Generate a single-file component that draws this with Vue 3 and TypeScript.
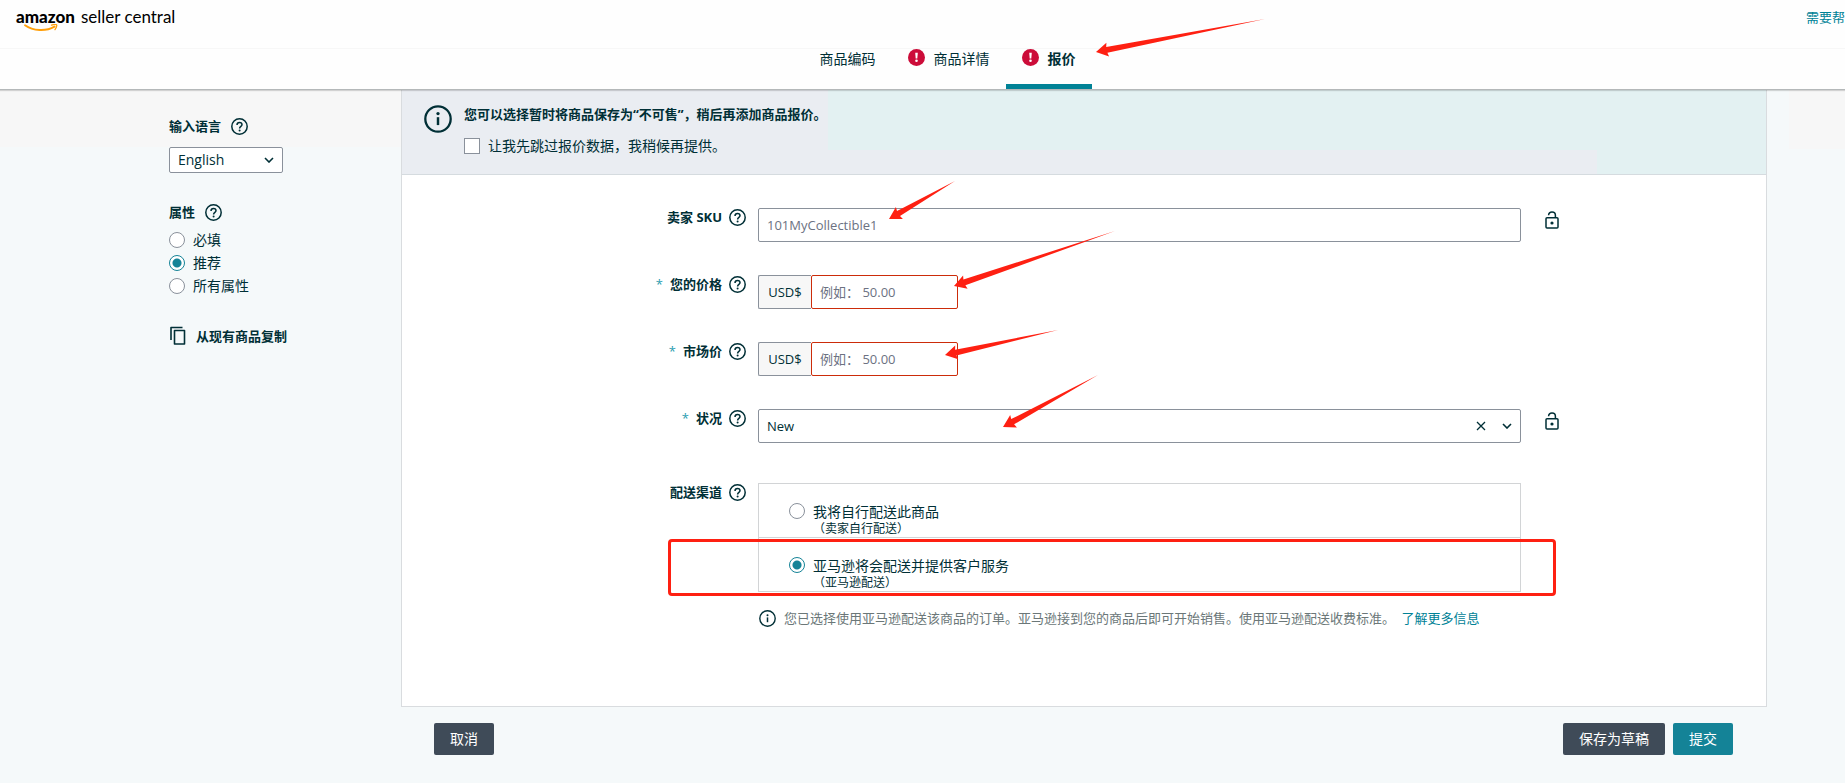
<script setup lang="ts">
import { ref } from 'vue'

type Point = [number, number]

interface Tab {
  label: string
  alert: boolean
  active: boolean
}

const tabs: Tab[] = [
  { label: '商品编码', alert: false, active: false },
  { label: '商品详情', alert: true, active: false },
  { label: '报价', alert: true, active: true },
]

const attributeOptions = ['必填', '推荐', '所有属性']
const attribute = ref('推荐')
const language = ref('English')
const skipOffer = ref(false)
const sku = ref('')
const condition = ref('New')

const prices = ref([
  { id: 'price', label: '您的价格', value: '' },
  { id: 'list-price', label: '市场价', value: '' },
])

const channels = [
  { id: 'mfn', label: '我将自行配送此商品', note: '（卖家自行配送）' },
  { id: 'afn', label: '亚马逊将会配送并提供客户服务', note: '（亚马逊配送）' },
]
const channel = ref('afn')

const arrows: { tip: Point; tail: Point }[] = [
  { tip: [1096, 52], tail: [1265, 19] },
  { tip: [889, 219], tail: [955, 181] },
  { tip: [954, 286], tail: [1115, 231] },
  { tip: [945, 355], tail: [1058, 330] },
  { tip: [1003, 427], tail: [1098, 375] },
]

// Tapered arrow: wide at the head, narrowing to a point at the tail.
function arrowPoints(tip: Point, tail: Point): string {
  const dx = tail[0] - tip[0]
  const dy = tail[1] - tip[1]
  const len = Math.hypot(dx, dy)
  const ux = dx / len
  const uy = dy / len
  const at = (along: number, side: number) =>
    `${(tip[0] + ux * along - uy * side).toFixed(1)},${(tip[1] + uy * along + ux * side).toFixed(1)}`
  return [at(0, 0), at(12, 7), at(11, 3), at(len, 0), at(11, -3), at(12, -7)].join(' ')
}
</script>

<template>
  <div class="page">
    <header class="top">
      <div class="brand-bar">
        <a class="brand" href="#">
          <strong>amazon</strong><span>seller central</span>
          <svg class="smile" viewBox="0 0 34 8" aria-hidden="true">
            <path d="M1 1.2C9 7 22 7.6 30.5 2.6" fill="none" stroke="#ff9f0a" stroke-width="1.9" stroke-linecap="round" />
            <path d="M27.5 1.2C29.5.4 31.8.2 32.6.8C33 1.7 32 4.2 31 5.6" fill="none" stroke="#ff9f0a" stroke-width="1.3" stroke-linecap="round" />
          </svg>
        </a>
        <a class="help-link" href="#">需要帮</a>
      </div>
      <nav class="tabs">
        <a v-for="t in tabs" :key="t.label" href="#" class="tab" :class="{ active: t.active }">
          <svg v-if="t.alert" class="icon" viewBox="0 0 17 17" aria-hidden="true">
            <circle cx="8.5" cy="8.5" r="8.5" fill="#cc0c39" />
            <path d="M7.2 3.8h2.6l-.5 5.6H7.7z" fill="#fff" />
            <circle cx="8.5" cy="11.8" r="1.3" fill="#fff" />
          </svg>
          <span>{{ t.label }}</span>
        </a>
      </nav>
    </header>

    <div class="body">
      <aside class="side">
        <div class="side-title">
          <label for="language">输入语言</label>
          <svg class="icon" viewBox="0 0 17 17" aria-hidden="true"><use href="#help" /></svg>
        </div>
        <div class="select language">
          <select id="language" v-model="language">
            <option>English</option>
          </select>
          <svg class="chevron" viewBox="0 0 10 6" aria-hidden="true"><path d="M1 1l4 4 4-4" /></svg>
        </div>

        <fieldset class="attributes">
          <legend class="side-title">
            <span>属性</span>
            <svg class="icon" viewBox="0 0 17 17" aria-hidden="true"><use href="#help" /></svg>
          </legend>
          <label v-for="o in attributeOptions" :key="o" class="choice">
            <input v-model="attribute" type="radio" name="attribute" :value="o" />
            <span>{{ o }}</span>
          </label>
        </fieldset>

        <button type="button" class="copy">
          <svg viewBox="0 0 18 20" aria-hidden="true">
            <path d="M2 14V1.5h11.5M5.5 4.5h10v13.5h-10z" fill="none" stroke="#002f36" stroke-width="1.6" stroke-linejoin="round" />
          </svg>
          <span>从现有商品复制</span>
        </button>
      </aside>

      <main class="main">
        <section class="card">
          <div class="notice">
            <svg class="notice-icon" viewBox="0 0 17 17" aria-hidden="true"><use href="#info" /></svg>
            <div class="notice-text">
              <strong>您可以选择暂时将商品保存为“不可售”，稍后再添加商品报价。</strong>
              <label class="choice">
                <input v-model="skipOffer" type="checkbox" />
                <span>让我先跳过报价数据，我稍候再提供。</span>
              </label>
            </div>
          </div>

          <form class="form" @submit.prevent>
            <div class="row">
              <div class="label">
                <label for="sku">卖家 SKU</label>
                <svg class="icon" viewBox="0 0 17 17" aria-hidden="true"><use href="#help" /></svg>
              </div>
              <input id="sku" v-model="sku" class="text" type="text" placeholder="101MyCollectible1" />
              <button type="button" class="lock" aria-label="锁定">
                <svg viewBox="0 0 14 18" aria-hidden="true"><use href="#lock" /></svg>
              </button>
            </div>

            <div v-for="p in prices" :key="p.id" class="row">
              <div class="label">
                <span class="star">*</span>
                <label :for="p.id">{{ p.label }}</label>
                <svg class="icon" viewBox="0 0 17 17" aria-hidden="true"><use href="#help" /></svg>
              </div>
              <div class="money">
                <span class="currency">USD$</span>
                <input :id="p.id" v-model="p.value" class="text invalid" type="text" placeholder="例如： 50.00" />
              </div>
            </div>

            <div class="row">
              <div class="label">
                <span class="star">*</span>
                <label for="condition">状况</label>
                <svg class="icon" viewBox="0 0 17 17" aria-hidden="true"><use href="#help" /></svg>
              </div>
              <div class="select condition">
                <select id="condition" v-model="condition">
                  <option>New</option>
                </select>
                <button type="button" class="clear" aria-label="清除" @click="condition = ''">
                  <svg viewBox="0 0 10 10" aria-hidden="true">
                    <path d="M1 1l8 8M9 1l-8 8" stroke="#002f36" stroke-width="1.3" />
                  </svg>
                </button>
                <svg class="chevron" viewBox="0 0 10 6" aria-hidden="true"><path d="M1 1l4 4 4-4" /></svg>
              </div>
              <button type="button" class="lock" aria-label="锁定">
                <svg viewBox="0 0 14 18" aria-hidden="true"><use href="#lock" /></svg>
              </button>
            </div>

            <div class="row channel-row">
              <div class="label">
                <span id="channel-label">配送渠道</span>
                <svg class="icon" viewBox="0 0 17 17" aria-hidden="true"><use href="#help" /></svg>
              </div>
              <div>
                <div class="channels" role="radiogroup" aria-labelledby="channel-label">
                  <div v-for="c in channels" :key="c.id" class="channel">
                    <label class="choice">
                      <input v-model="channel" type="radio" name="channel" :value="c.id" />
                      <span>{{ c.label }}<small>{{ c.note }}</small></span>
                    </label>
                    <div v-if="c.id === 'afn'" class="mark"></div>
                  </div>
                </div>
                <p class="hint">
                  <svg class="icon" viewBox="0 0 17 17" aria-hidden="true"><use href="#info" /></svg>
                  <span>
                    您已选择使用亚马逊配送该商品的订单。亚马逊接到您的商品后即可开始销售。使用亚马逊配送收费标准。
                    <a href="#">了解更多信息</a>
                  </span>
                </p>
              </div>
            </div>
          </form>
        </section>

        <footer class="actions">
          <button type="button" class="btn">取消</button>
          <div class="group">
            <button type="button" class="btn">保存为草稿</button>
            <button type="button" class="btn primary">提交</button>
          </div>
        </footer>
      </main>
    </div>

    <svg class="arrows" aria-hidden="true">
      <defs>
        <symbol id="help" viewBox="0 0 17 17">
          <circle cx="8.5" cy="8.5" r="7.7" fill="none" stroke="#002f36" stroke-width="1.5" />
          <path d="M6 6.9C6 5.4 7 4.6 8.5 4.6S11 5.4 11 6.8C11 8.3 8.6 8.6 8.6 10.4" fill="none" stroke="#002f36" stroke-width="1.5" />
          <circle cx="8.6" cy="12.5" r="1" fill="#002f36" />
        </symbol>
        <symbol id="info" viewBox="0 0 17 17">
          <circle cx="8.5" cy="8.5" r="7.7" fill="none" stroke="#002f36" stroke-width="1.4" />
          <path d="M8.5 7.4v4.8" stroke="#002f36" stroke-width="1.5" />
          <circle cx="8.5" cy="5.2" r="1" fill="#002f36" />
        </symbol>
        <symbol id="lock" viewBox="0 0 14 18">
          <rect x="1" y="6.8" width="12" height="10.2" rx="1" fill="none" stroke="#002f36" stroke-width="1.5" />
          <path d="M3.6 4.2C3.6 2.2 5 1 7 1s3.4 1.2 3.4 3.2v2.6" fill="none" stroke="#002f36" stroke-width="1.5" />
          <circle cx="7" cy="12" r="1.6" fill="#002f36" />
        </symbol>
      </defs>
      <polygon v-for="(a, i) in arrows" :key="i" :points="arrowPoints(a.tip, a.tail)" fill="#fe2012" />
    </svg>
  </div>
</template>

<style>
body {
  margin: 0;
  background: #f5f9fa;
}
</style>

<style scoped>
.page {
  position: relative;
  min-height: 100vh;
  background: #f5f9fa;
  color: #002f36;
  font: 14px/20px 'Open Sans', 'Noto Sans CJK SC', sans-serif;
}
.page * {
  box-sizing: border-box;
}
a {
  color: #008296;
  text-decoration: none;
}
button,
input,
select {
  font: inherit;
  color: inherit;
  margin: 0;
}
button {
  padding: 0;
  border: 0;
  background: none;
  cursor: pointer;
}
.icon {
  width: 17px;
  height: 17px;
  flex: none;
}

/* header */
.top {
  position: relative;
  background: #fefefe;
  border-bottom: 1px solid #b4b8b9;
  box-shadow: 0 1px 1px rgba(0, 0, 0, 0.15);
}
.brand-bar {
  display: flex;
  justify-content: space-between;
  align-items: flex-start;
  height: 49px;
  padding: 7px 0 0 16px;
  border-bottom: 1px solid #f7f7f7;
}
.brand {
  position: relative;
  display: flex;
  gap: 6px;
  color: #000;
  font-family: Lato, sans-serif;
  font-size: 17px;
  white-space: nowrap;
}
.brand strong {
  font-weight: 900;
}
.smile {
  position: absolute;
  left: 8px;
  top: 17px;
  width: 34px;
  height: 8px;
}
.help-link {
  font-size: 13px;
}
.tabs {
  display: flex;
  justify-content: center;
  height: 40px;
  padding-left: 50px;
}
.tab {
  display: flex;
  align-items: flex-start;
  gap: 9px;
  padding: 0 16px;
  color: inherit;
}
.tab.active {
  font-weight: 700;
  border-bottom: 5px solid #008296;
}

/* sidebar */
.body {
  display: flex;
  padding-right: 78px;
  background:
    linear-gradient(#f7f7f7, #f7f7f7) left top / 401px 57px no-repeat,
    linear-gradient(#f7f7f7, #f7f7f7) right top / 56px 59px no-repeat;
}
.side {
  width: 401px;
  flex: none;
  padding: 26px 0 0 169px;
}
.side-title {
  display: flex;
  align-items: center;
  gap: 10px;
  padding: 0;
  font-size: 13px;
  font-weight: 700;
}
.select {
  display: flex;
  align-items: center;
  border: 1px solid #8a919b;
  border-radius: 2px;
  background: #fff;
}
.select select {
  appearance: none;
  flex: 1;
  min-width: 0;
  height: 100%;
  padding: 0 8px;
  border: 0;
  background: none;
}
.chevron {
  width: 10px;
  height: 6px;
  margin-right: 8px;
  fill: none;
  stroke: #002f36;
  stroke-width: 1.6;
  pointer-events: none;
}
.language {
  width: 114px;
  height: 26px;
  margin-top: 11px;
}
.attributes {
  margin: 29px 0 0;
  padding: 0;
  border: 0;
}
.attributes .side-title {
  margin-bottom: 6px;
}
.choice {
  display: flex;
  align-items: center;
  gap: 8px;
}
.attributes .choice {
  height: 23px;
}
.choice input {
  appearance: none;
  flex: none;
  width: 16px;
  height: 16px;
  border: 1px solid #8a919b;
  background: #fff;
}
.choice input[type='radio'] {
  border-radius: 50%;
}
.choice input[type='radio']:checked {
  border-color: #148397;
  background: radial-gradient(circle, #148397 4px, #fff 5px);
}
.choice input[type='checkbox']:checked {
  background: #148397;
}
.copy {
  display: flex;
  align-items: center;
  gap: 9px;
  margin-top: 29px;
  font-size: 13px;
  font-weight: 700;
}
.copy svg {
  width: 18px;
  height: 20px;
}

/* card */
.main {
  flex: 1;
  min-width: 0;
}
.card {
  border: 1px solid #d9dcdf;
  border-top: 0;
  background: #fff;
}
.notice {
  display: flex;
  gap: 12px;
  padding: 14px 22px 18px;
  border-bottom: 1px solid #d5dbdf;
  background:
    linear-gradient(#e3f1f2, #e3f1f2) right top / calc(100% - 426px) 60px no-repeat,
    linear-gradient(#e3f1f2, #e3f1f2) right top / 169px 100% no-repeat,
    #eaedf2;
}
.notice-icon {
  width: 28px;
  height: 28px;
  margin-top: 1px;
  flex: none;
}
.notice-text {
  display: flex;
  flex-direction: column;
  gap: 12px;
}
.notice-text strong {
  font-size: 13px;
}

/* form */
.form {
  display: flex;
  flex-direction: column;
  gap: 33px;
  padding: 33px 0 78px;
}
.row {
  display: grid;
  grid-template-columns: 344px minmax(0, 1fr) 233px;
  column-gap: 12px;
  align-items: start;
}
.label {
  display: flex;
  justify-content: flex-end;
  align-items: center;
  gap: 7px;
  height: 18px;
  font-size: 13px;
  font-weight: 700;
}
.star {
  color: #2a9db0;
  font-weight: 400;
}
.text {
  width: 100%;
  height: 34px;
  padding: 0 8px;
  border: 1px solid #8a919b;
  border-radius: 2px;
  background: #fff;
  font-size: 13px;
}
.text::placeholder {
  color: #6c7282;
  opacity: 1;
}
.money {
  display: flex;
  width: 200px;
}
.currency {
  flex: none;
  width: 53px;
  height: 34px;
  border: 1px solid #8a919b;
  border-right: 0;
  border-radius: 2px 0 0 2px;
  background: #f7f7f7;
  font-size: 13px;
  line-height: 32px;
  text-align: center;
}
.text.invalid {
  border-color: #cc2c0a;
}
.condition {
  height: 34px;
  font-size: 13px;
}
.clear {
  display: flex;
  margin-right: 16px;
}
.clear svg {
  width: 10px;
  height: 10px;
}
.lock {
  display: flex;
  justify-self: start;
  margin: 3px 0 0 12px;
}
.lock svg {
  width: 14px;
  height: 18px;
}
.channel-row {
  margin-top: 7px;
}
.channels {
  border: 1px solid #d2d4d6;
}
.channel {
  position: relative;
  padding: 19px 30px 0;
}
.channel + .channel {
  border-top: 1px solid #d2d4d6;
}
.channel .choice {
  align-items: flex-start;
  line-height: 18px;
}
.channel small {
  display: block;
  font-size: 12px;
  line-height: 16px;
}
.mark {
  position: absolute;
  inset: 1px -36px -5px -91px;
  border: 3px solid #fe2012;
  border-radius: 4px;
  pointer-events: none;
}
.hint {
  display: flex;
  align-items: center;
  gap: 8px;
  margin: 16px 0 0 1px;
  color: #6b7778;
  font-size: 13px;
}
.hint a {
  margin-left: 3px;
}

/* footer */
.actions {
  display: flex;
  justify-content: space-between;
  padding: 16px 34px 27px 33px;
}
.group {
  display: flex;
  gap: 8px;
}
.btn {
  height: 32px;
  padding: 0 16px;
  border-radius: 2px;
  background: #3f4b58;
  color: #fff;
}
.btn.primary {
  background: #148397;
}

.arrows {
  position: absolute;
  inset: 0;
  width: 100%;
  height: 100%;
  pointer-events: none;
}
</style>
